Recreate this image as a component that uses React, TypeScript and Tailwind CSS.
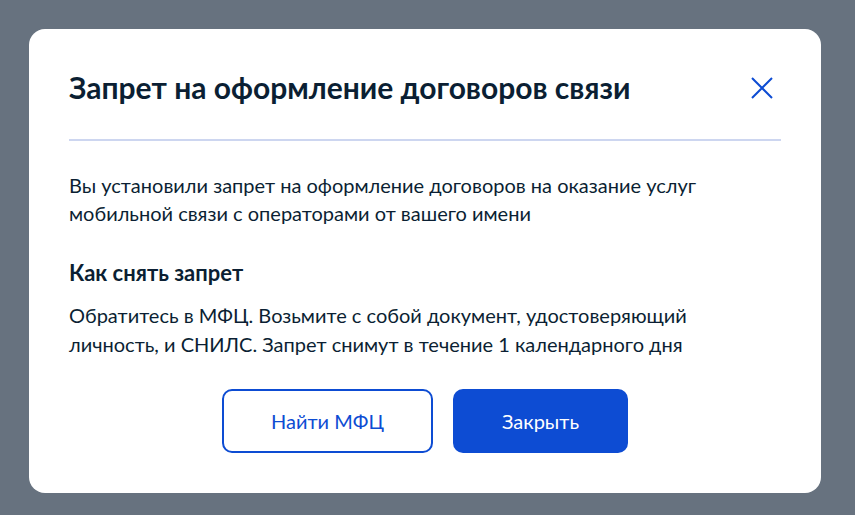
export default function App() {
  return (
    <div className="h-[515px] w-[855px] overflow-hidden bg-[#67727f] pl-[29px] pt-[29px] font-['Lato',sans-serif] text-[#0b1f33]">
      <div className="w-[792px] rounded-2xl bg-white px-10 pb-10 pt-10">
        <div className="flex items-start justify-between">
          <h2 className="text-[30px] font-bold leading-9">
            Запрет на оформление договоров связи
          </h2>
          <button className="mr-[8px] mt-[8px] text-[#0d4cd3]">
            <svg width="22" height="22" viewBox="0 0 22 22" fill="none">
              <path
                d="M1 1L21 21M21 1L1 21"
                stroke="currentColor"
                strokeWidth="2"
              />
            </svg>
          </button>
        </div>

        <div className="mt-[34px] h-[2px] bg-[#cdd6f0]" />

        <p className="mt-[30px] text-xl leading-7">
          Вы установили запрет на оформление договоров на оказание услуг
          <br />
          мобильной связи с операторами от вашего имени
        </p>

        <h3 className="mt-8 text-[22px] font-bold leading-7">Как снять запрет</h3>
        <p className="mt-[14px] text-xl leading-[29px]">
          Обратитесь в МФЦ. Возьмите с собой документ, удостоверяющий
          <br />
          личность, и СНИЛС. Запрет снимут в течение 1 календарного дня
        </p>

        <div className="mt-[30px] flex justify-center gap-5">
          <button className="h-16 w-[211px] rounded-[10px] border-2 border-[#0d4cd3] text-xl text-[#0d4cd3]">
            Найти МФЦ
          </button>
          <button className="h-16 w-[175px] rounded-[10px] bg-[#0d4cd3] text-xl text-white">
            Закрыть
          </button>
        </div>
      </div>
    </div>
  );
}
